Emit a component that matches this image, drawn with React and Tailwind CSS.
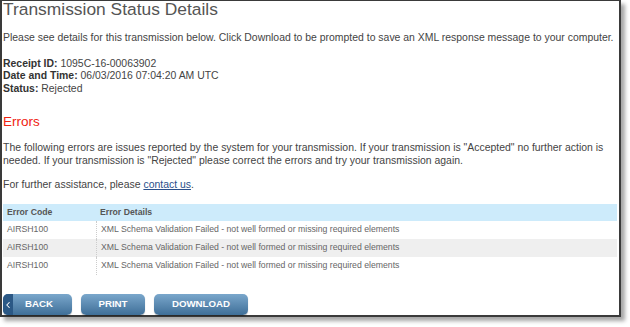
import { ChevronLeft } from 'lucide-react'

const rows = [
  { code: 'AIRSH100', detail: 'XML Schema Validation Failed - not well formed or missing required elements' },
  { code: 'AIRSH100', detail: 'XML Schema Validation Failed - not well formed or missing required elements' },
  { code: 'AIRSH100', detail: 'XML Schema Validation Failed - not well formed or missing required elements' },
]

const btn =
  'h-[21px] rounded-[5px] bg-gradient-to-b from-[#7aa7cc] to-[#3f6f98] text-white font-bold text-[9.7px] flex items-center justify-center shadow-[0_1px_1px_rgba(0,0,0,0.3)]'

export default function App() {
  return (
    <div className="w-[630px] h-[327px] bg-white" style={{ fontFamily: '"Liberation Sans", Arial, sans-serif' }}>
      <div className="w-[621px] h-[317px] border-l-2 border-t border-r-2 border-b-2 border-[#3a3a3a] shadow-[4px_4px_4px_rgba(0,0,0,0.35)] bg-white flex flex-col">
        <h1 className="pl-[1px] text-[17.4px] leading-[17px] text-[#555]">Transmission Status Details</h1>
        <p className="pl-[1px] mt-[14px] text-[10.45px] leading-[12.5px] text-[#444]">
          Please see details for this transmission below. Click Download to be prompted to save an XML response message to your computer.
        </p>
        <div className="pl-[1px] mt-[13px] text-[10.45px] leading-[12.5px] text-[#444]">
          <div><span className="font-bold text-[#333]">Receipt ID:</span> 1095C-16-00063902</div>
          <div><span className="font-bold text-[#333]">Date and Time:</span> 06/03/2016 07:04:20 AM UTC</div>
          <div><span className="font-bold text-[#333]">Status:</span> Rejected</div>
        </div>
        <h2 className="pl-[1px] mt-[19px] text-[13.5px] leading-[16px] text-[#f0220f]">Errors</h2>
        <p className="pl-[1px] pr-[4px] mt-[12px] text-[10.45px] leading-[12.7px] text-[#444]">
          The following errors are issues reported by the system for your transmission. If your transmission is "Accepted" no further action is needed. If your transmission is "Rejected" please correct the errors and try your transmission again.
        </p>
        <p className="pl-[1px] mt-[12px] text-[10.45px] leading-[12.5px] text-[#444]">
          For further assistance, please <a className="text-[#2a4f8a] underline">contact us</a>.
        </p>
        <div className="ml-[1px] mr-[2px] mt-[12px] text-[8.7px] text-[#666]">
          <div className="flex h-[17px] items-center bg-[#cdebfb] font-bold text-[#555]">
            <div className="w-[93px] pl-[4px]">Error Code</div>
            <div className="pl-[4px]">Error Details</div>
          </div>
          {rows.map((r, i) => (
            <div key={i} className={`flex h-[18px] items-center ${i === 1 ? 'bg-[#efefef]' : 'bg-white'}`}>
              <div className="w-[93px] pl-[4px] h-full flex items-center">{r.code}</div>
              <div className="pl-[4px] h-full flex items-center border-l border-dotted border-[#ccc]">{r.detail}</div>
            </div>
          ))}
        </div>
        <div className="flex gap-[9px] ml-[1px] mt-auto">
          <button className={`${btn} w-[69px] overflow-hidden justify-start`}>
            <span className="w-[10px] h-full bg-[#2b5885] flex items-center justify-center">
              <ChevronLeft className="w-[10px] h-[10px]" strokeWidth={2.5} />
            </span>
            <span className="pl-[12px]">BACK</span>
          </button>
          <button className={`${btn} w-[64px]`}>PRINT</button>
          <button className={`${btn} w-[94px]`}>DOWNLOAD</button>
        </div>
      </div>
    </div>
  )
}
